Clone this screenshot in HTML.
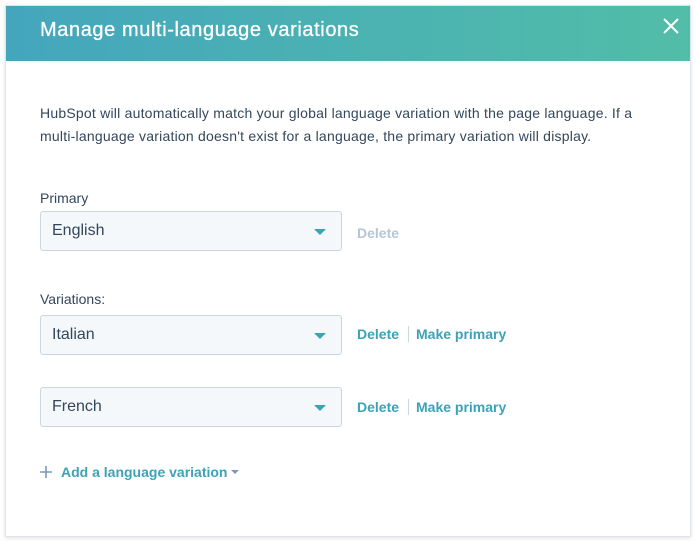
<!DOCTYPE html>
<html><head><style>
body{margin:0;width:696px;height:541px;background:#fff;font-family:"Liberation Sans",sans-serif;position:relative;overflow:hidden}
.modal{position:absolute;left:5px;top:5px;width:684px;height:530px;border:1px solid #dfe3eb;box-shadow:0 1px 4px rgba(0,0,0,.12);background:#fff}
.hdr{position:absolute;left:0;top:0;right:0;height:55px;background:linear-gradient(90deg,#44a6bd,#52bda8)}
.hdr h1{margin:0;position:absolute;left:34px;top:13px;font-size:20px;font-weight:normal;color:#fff;letter-spacing:.6px;-webkit-text-stroke:.3px #fff}
.x{position:absolute;right:11px;top:12px}
.t{position:absolute;font-size:14px;color:#33475b}
.sel{position:absolute;left:34px;width:302px;height:40px;background:#f5f8fa;border:1px solid #cbd6e2;border-radius:3px;box-sizing:border-box}
.sel span{position:absolute;left:11px;top:10px;font-size:16px;color:#33475b}
.sel i{position:absolute;right:15px;top:17px;border-left:6px solid transparent;border-right:6px solid transparent;border-top:6px solid #3ea2b9}
.lk{position:absolute;font-size:14px;font-weight:bold;color:#3ba3b8}
.sep{position:absolute;width:1px;height:16px;background:#cbd6e2}
</style></head><body>
<div class="modal">
<div class="hdr"><h1>Manage multi-language variations</h1>
<svg class="x" width="16" height="16" viewBox="0 0 16 16"><path d="M1 1L15 15M15 1L1 15" stroke="#fff" stroke-width="2"/></svg></div>
<div class="t" style="left:34px;top:96px;line-height:23px;width:610px;letter-spacing:.22px">HubSpot will automatically match your global language variation with the page language. If a multi-language variation doesn't exist for a language, the primary variation will display.</div>
<div class="t" style="left:34px;top:184px">Primary</div>
<div class="sel" style="top:205px"><span>English</span><i></i></div>
<div class="lk" style="left:351px;top:219px;color:#b6c6d6">Delete</div>
<div class="t" style="left:34px;top:285px">Variations:</div>
<div class="sel" style="top:309px"><span>Italian</span><i></i></div>
<div class="lk" style="left:351px;top:320px">Delete</div><div class="sep" style="left:402px;top:320px"></div><div class="lk" style="left:410px;top:320px">Make primary</div>
<div class="sel" style="top:381px"><span>French</span><i></i></div>
<div class="lk" style="left:351px;top:393px">Delete</div><div class="sep" style="left:402px;top:393px"></div><div class="lk" style="left:410px;top:393px">Make primary</div>
<svg style="position:absolute;left:34px;top:460px" width="12" height="12" viewBox="0 0 12 12"><path d="M6 0V12M0 6H12" stroke="#7c98b6" stroke-width="1.6"/></svg>
<div class="lk" style="left:55px;top:458px;font-size:14px">Add a language variation</div>
<div style="position:absolute;left:225px;top:464px;border-left:4px solid transparent;border-right:4px solid transparent;border-top:4px solid #7c98b6"></div>
</div>
</body></html>
